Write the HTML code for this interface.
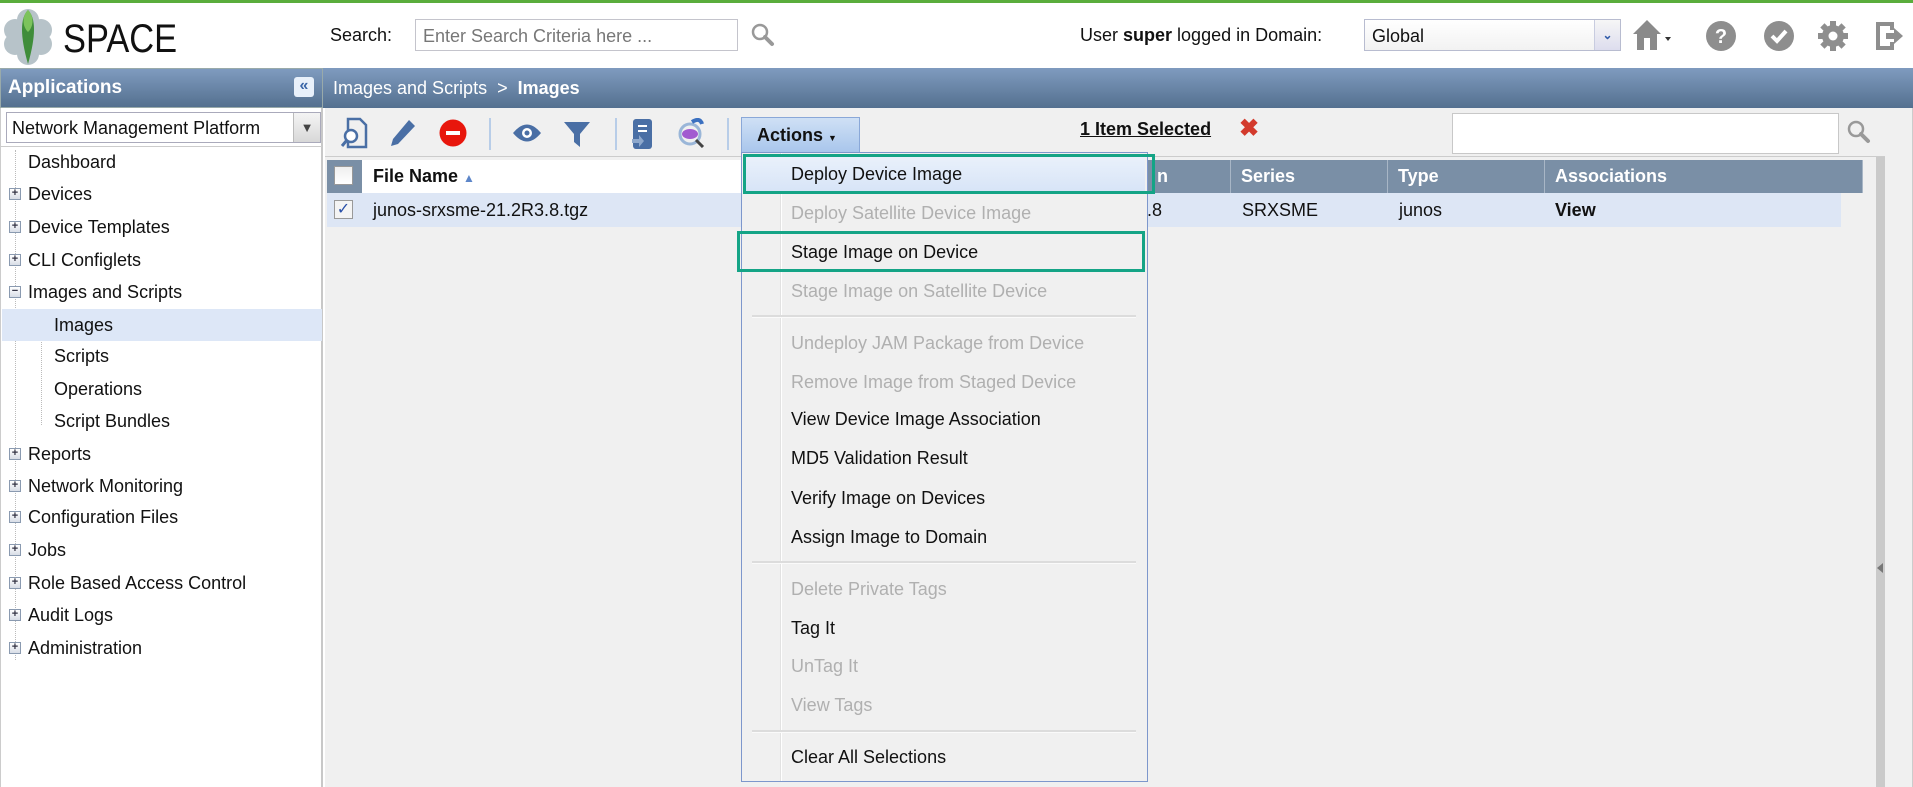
<!DOCTYPE html>
<html><head><meta charset="utf-8"><style>
*{box-sizing:border-box;margin:0;padding:0}
body{width:1913px;height:787px;overflow:hidden;background:#fff;font-family:"Liberation Sans",Arial,sans-serif;position:relative;color:#111}
.a{position:absolute}
.t{position:absolute;font-size:18px;white-space:nowrap;line-height:20px}
.mi{position:absolute;left:791px;font-size:18px;white-space:nowrap;line-height:20px}
.dis{color:#b0b0b0}
.pl{position:absolute;left:9px;width:12px;height:12px;border:1px solid #8a9ab0;background:linear-gradient(#fff,#d8dde6);font-size:11px;line-height:9px;text-align:center;color:#334;font-weight:bold}
.sep{position:absolute;left:752px;width:384px;height:3px;background:#dcdcdc;border-bottom:1px solid #fafafa}
.tsep{position:absolute;top:118px;width:2px;height:32px;background:#b8cde8}
.hd{position:absolute;top:160px;height:33px;background:#7a8fa6;color:#fff;font-weight:bold;font-size:18px;line-height:33px;padding-left:10px;border-right:1px solid #a8b6c6}
</style></head><body>
<div class="a" style="left:0;top:0;width:1913px;height:3px;background:#5aad3c"></div>
<svg class="a" style="left:2px;top:6px" width="52" height="60" viewBox="0 0 52 60">
<g fill="#9fb0b8" opacity=".75"><circle cx="26" cy="14" r="11"/><circle cx="13" cy="24" r="11"/><circle cx="39" cy="24" r="11"/><circle cx="13" cy="38" r="11"/><circle cx="39" cy="38" r="11"/><circle cx="26" cy="48" r="11"/></g>
<path d="M26 4 C34 12 34 30 26 58 C18 30 18 12 26 4Z" fill="#3f8d3a"/><path d="M26 4 C32 10 32 20 26 26 C20 20 20 10 26 4Z" fill="#7cc35c"/></svg>
<div class="a" style="left:63px;top:17px;font-size:40px;line-height:44px;color:#111;transform:scaleX(.86);transform-origin:left;font-weight:300">SPACE</div>
<div class="t" style="left:330px;top:25px">Search:</div>
<div class="a" style="left:415px;top:19px;width:323px;height:32px;border:1px solid #c4c4cc;font-size:18px;color:#777;padding:6px 0 0 7px">Enter Search Criteria here ...</div>
<svg class="a" style="left:750px;top:22px" width="26" height="26" viewBox="0 0 26 26"><circle cx="10" cy="10" r="7" fill="none" stroke="#999" stroke-width="2.5"/><path d="M15 15 L22 22" stroke="#999" stroke-width="4" stroke-linecap="round"/></svg>
<div class="t" style="left:1080px;top:25px">User <b>super</b> logged in Domain:</div>
<div class="a" style="left:1364px;top:19px;width:257px;height:32px;border:1px solid #b8bcd0;background:linear-gradient(#fff,#f2f2f2);font-size:18px;padding:6px 0 0 7px">Global<div class="a" style="right:0;top:0;width:26px;height:30px;border-left:1px solid #c8cce0;background:linear-gradient(#f6f6f6,#dde);color:#2e5aa8;font-size:12px;text-align:center;line-height:30px;font-weight:bold">&#8964;</div></div>
<svg class="a" style="left:1632px;top:18px" width="40" height="34" viewBox="0 0 40 34"><path d="M15 2 L1 16 L5 16 L5 32 L25 32 L25 16 L29 16Z" fill="#8a8a8a"/><rect x="12" y="20" width="6" height="12" fill="#fff"/><path d="M33 19 L39 19 L36 23Z" fill="#333"/></svg>
<svg class="a" style="left:1705px;top:20px" width="32" height="32"><circle cx="16" cy="16" r="15" fill="#8e8e8e"/><text x="16" y="23" font-family="Liberation Sans" font-weight="bold" font-size="20" fill="#fff" text-anchor="middle">?</text></svg>
<svg class="a" style="left:1763px;top:20px" width="32" height="32"><circle cx="16" cy="16" r="15" fill="#8e8e8e"/><path d="M9 16 L14 21 L23 11" stroke="#fff" stroke-width="4" fill="none"/></svg>
<svg class="a" style="left:1817px;top:20px" width="32" height="32" viewBox="0 0 32 32"><g fill="#8e8e8e"><circle cx="16" cy="16" r="11"/><rect x="13" y="1" width="6" height="30"/><rect x="1" y="13" width="30" height="6"/><rect x="13" y="1" width="6" height="30" transform="rotate(45 16 16)"/><rect x="13" y="1" width="6" height="30" transform="rotate(-45 16 16)"/></g><circle cx="16" cy="16" r="4.5" fill="#fff"/></svg>
<svg class="a" style="left:1874px;top:20px" width="32" height="32" viewBox="0 0 32 32"><path d="M2 2 H20 V10 H16 V6 H6 V26 H16 V22 H20 V30 H2Z" fill="#8e8e8e"/><path d="M12 13 H20 V8 L29 16 L20 24 V19 H12Z" fill="#8e8e8e"/></svg>

<div class="a" style="left:0;top:68px;width:323px;height:40px;background:linear-gradient(#7f9bbf,#54708f);border:1px solid #9aa"></div>
<div class="a" style="left:8px;top:77px;font-size:19px;font-weight:bold;color:#fff">Applications</div>
<div class="a" style="left:294px;top:77px;width:20px;height:20px;background:#e8f0fa;border-radius:3px;color:#3a66a8;font-size:16px;line-height:18px;text-align:center;font-weight:bold">«</div>
<div class="a" style="left:0;top:108px;width:323px;height:679px;border-right:2px solid #c8c8c8;border-left:1px solid #ccc"></div>
<div class="a" style="left:6px;top:112px;width:315px;height:31px;border:1px solid #aab;background:#fff;font-size:18px;padding:5px 0 0 5px">Network Management Platform<div class="a" style="right:0;top:0;width:27px;height:29px;background:linear-gradient(#f4f4f4,#d8d8d8);border-left:1px solid #bbb;font-size:13px;text-align:center;line-height:29px;color:#444">&#9660;</div></div>
<div class="a" style="left:0;top:146px;width:322px;height:1px;background:#ccc"></div>
<div class="a" style="left:15px;top:150px;height:510px;border-left:1px dotted #bbb"></div>
<div class="a" style="left:41px;top:340px;height:85px;border-left:1px dotted #bbb"></div>
<div class="a" style="left:2px;top:309px;width:320px;height:32px;background:#dde7f7"></div>
<div class="t" style="left:28px;top:152px">Dashboard</div>
<div class="pl" style="top:188px">+</div><div class="t" style="left:28px;top:184px">Devices</div>
<div class="pl" style="top:221px">+</div><div class="t" style="left:28px;top:217px">Device Templates</div>
<div class="pl" style="top:254px">+</div><div class="t" style="left:28px;top:250px">CLI Configlets</div>
<div class="pl" style="top:286px">−</div><div class="t" style="left:28px;top:282px">Images and Scripts</div>
<div class="t" style="left:54px;top:315px">Images</div>
<div class="t" style="left:54px;top:346px">Scripts</div>
<div class="t" style="left:54px;top:379px">Operations</div>
<div class="t" style="left:54px;top:411px">Script Bundles</div>
<div class="pl" style="top:448px">+</div><div class="t" style="left:28px;top:444px">Reports</div>
<div class="pl" style="top:480px">+</div><div class="t" style="left:28px;top:476px">Network Monitoring</div>
<div class="pl" style="top:511px">+</div><div class="t" style="left:28px;top:507px">Configuration Files</div>
<div class="pl" style="top:544px">+</div><div class="t" style="left:28px;top:540px">Jobs</div>
<div class="pl" style="top:577px">+</div><div class="t" style="left:28px;top:573px">Role Based Access Control</div>
<div class="pl" style="top:609px">+</div><div class="t" style="left:28px;top:605px">Audit Logs</div>
<div class="pl" style="top:642px">+</div><div class="t" style="left:28px;top:638px">Administration</div>

<div class="a" style="left:323px;top:68px;width:1590px;height:40px;background:linear-gradient(#7f9bbf,#54708f)"></div>
<div class="a" style="left:333px;top:78px;font-size:18px;color:#fff">Images and Scripts &nbsp;&gt;&nbsp; <b>Images</b></div>
<div class="a" style="left:325px;top:108px;width:1588px;height:679px;background:#f0f0f0;border-right:1px solid #ccc"></div>
<svg class="a" style="left:340px;top:117px" width="30" height="32" viewBox="0 0 30 32"><path d="M8 2 H20 L26 8 V30 H8Z" fill="none" stroke="#4a6fa5" stroke-width="2.5"/><circle cx="11" cy="19" r="6" fill="#fff" stroke="#4a6fa5" stroke-width="2.5"/><path d="M7 23 L2 29" stroke="#4a6fa5" stroke-width="3"/></svg>
<svg class="a" style="left:389px;top:118px" width="28" height="30"><path d="M20 2 L26 8 L9 26 L2 28 L4 21Z" fill="#4a6fa5"/></svg>
<svg class="a" style="left:439px;top:119px" width="28" height="28"><circle cx="14" cy="14" r="13.5" fill="#e8160c"/><rect x="7" y="12" width="14" height="4" fill="#fff"/></svg>
<div class="tsep" style="left:489px"></div>
<svg class="a" style="left:512px;top:122px" width="30" height="22"><path d="M1 11 Q15 -6 29 11 Q15 28 1 11Z" fill="#4a6fa5"/><circle cx="15" cy="11" r="5" fill="#fff"/><circle cx="15" cy="11" r="2.5" fill="#4a6fa5"/></svg>
<svg class="a" style="left:563px;top:120px" width="28" height="28"><path d="M1 2 H27 L17 14 V27 L11 22 V14Z" fill="#4a6fa5"/></svg>
<div class="tsep" style="left:615px"></div>
<svg class="a" style="left:630px;top:118px" width="24" height="32"><rect x="3" y="1" width="19" height="30" rx="3" fill="#4a6fa5"/><path d="M8 8 H17 M8 13 H17" stroke="#fff" stroke-width="2"/><path d="M2 21 H9 V17 L14 23 L9 29 V25 H2Z" fill="#8ea8cc"/></svg>
<svg class="a" style="left:676px;top:118px" width="30" height="30"><circle cx="14" cy="16" r="10" fill="none" stroke="#9ab6d8" stroke-width="3"/><ellipse cx="14" cy="16" rx="8" ry="5" fill="#a25bd0"/><path d="M16 4 Q24 -1 26 6" stroke="#3b70c0" stroke-width="4" fill="none"/><path d="M20 22 L27 29" stroke="#444" stroke-width="3"/></svg>
<div class="tsep" style="left:727px"></div>
<div class="a" style="left:741px;top:117px;width:119px;height:35px;background:linear-gradient(#cfe0f5,#a9c6ec);border:1px solid #8aa8d8;border-bottom:none;font-size:18px;font-weight:bold;padding:7px 0 0 15px">Actions <span style="font-size:9px">&#9660;</span></div>
<div class="a" style="left:1080px;top:119px;font-size:18px;font-weight:bold;text-decoration:underline">1 Item Selected</div>
<div class="a" style="left:1239px;top:114px;font-size:24px;font-weight:bold;color:#d33a2c">✖</div>
<div class="a" style="left:1452px;top:113px;width:387px;height:41px;background:#fff;border:1px solid #c8c8c8"></div>
<svg class="a" style="left:1846px;top:119px" width="26" height="26" viewBox="0 0 26 26"><circle cx="10" cy="10" r="7" fill="none" stroke="#999" stroke-width="2.5"/><path d="M15 15 L22 22" stroke="#999" stroke-width="4" stroke-linecap="round"/></svg>
<div class="a" style="left:325px;top:156px;width:1560px;height:1px;background:#ccc"></div>
<div class="a" style="left:327px;top:157px;width:1558px;height:630px;background:#f0f0f0"></div>
<div class="a" style="left:1876px;top:157px;width:9px;height:630px;background:#cacaca"></div>
<div class="a" style="left:327px;top:160px;width:35px;height:33px;background:#7a8fa6"></div>
<div class="a" style="left:334px;top:166px;width:19px;height:19px;border:1px solid #999;background:linear-gradient(#eee,#fff)"></div>
<div class="a" style="left:362px;top:160px;width:380px;height:33px;background:#fff;font-size:18px;font-weight:bold;line-height:33px;padding-left:11px">File Name <span style="color:#5d86c9;font-size:12px">&#9650;</span></div>
<div class="hd" style="left:1147px;width:84px">n</div>
<div class="hd" style="left:1231px;width:157px">Series</div>
<div class="hd" style="left:1388px;width:157px">Type</div>
<div class="hd" style="left:1545px;width:318px">Associations</div>
<div class="a" style="left:327px;top:193px;width:1514px;height:34px;background:#dde6f5"></div>
<div class="a" style="left:334px;top:200px;width:19px;height:19px;border:1px solid #999;background:#f4f4f4;color:#2a50a8;font-size:16px;line-height:17px;text-align:center">✓</div>
<div class="t" style="left:373px;top:200px">junos-srxsme-21.2R3.8.tgz</div>
<div class="t" style="left:1147px;top:200px">.8</div>
<div class="t" style="left:1242px;top:200px">SRXSME</div>
<div class="t" style="left:1399px;top:200px">junos</div>
<div class="t" style="left:1555px;top:200px;font-weight:bold">View</div>
<svg class="a" style="left:1876px;top:562px" width="8" height="12"><path d="M7 1 L1 6 L7 11Z" fill="#777"/></svg>

<div class="a" style="left:741px;top:152px;width:407px;height:630px;background:#f0f0f0;border:1px solid #7d97cc"></div>
<div class="a" style="left:780px;top:153px;width:2px;height:628px;background:#e2e2e2;border-right:1px solid #fff"></div>
<div class="a" style="left:745px;top:156px;width:400px;height:36px;background:linear-gradient(#eaf1fb,#d7e4f7)"></div>
<div class="mi" style="top:164px">Deploy Device Image</div>
<div class="mi dis" style="top:203px">Deploy Satellite Device Image</div>
<div class="mi" style="top:242px">Stage Image on Device</div>
<div class="mi dis" style="top:281px">Stage Image on Satellite Device</div>
<div class="sep" style="top:315px"></div>
<div class="mi dis" style="top:333px">Undeploy JAM Package from Device</div>
<div class="mi dis" style="top:372px">Remove Image from Staged Device</div>
<div class="mi" style="top:409px">View Device Image Association</div>
<div class="mi" style="top:448px">MD5 Validation Result</div>
<div class="mi" style="top:488px">Verify Image on Devices</div>
<div class="mi" style="top:527px">Assign Image to Domain</div>
<div class="sep" style="top:561px"></div>
<div class="mi dis" style="top:579px">Delete Private Tags</div>
<div class="mi" style="top:618px">Tag It</div>
<div class="mi dis" style="top:656px">UnTag It</div>
<div class="mi dis" style="top:695px">View Tags</div>
<div class="sep" style="top:730px"></div>
<div class="mi" style="top:747px">Clear All Selections</div>
<div class="a" style="left:743px;top:154px;width:412px;height:40px;border:3px solid #14a486"></div>
<div class="a" style="left:737px;top:231px;width:408px;height:41px;border:3px solid #14a486"></div>
</body></html>
